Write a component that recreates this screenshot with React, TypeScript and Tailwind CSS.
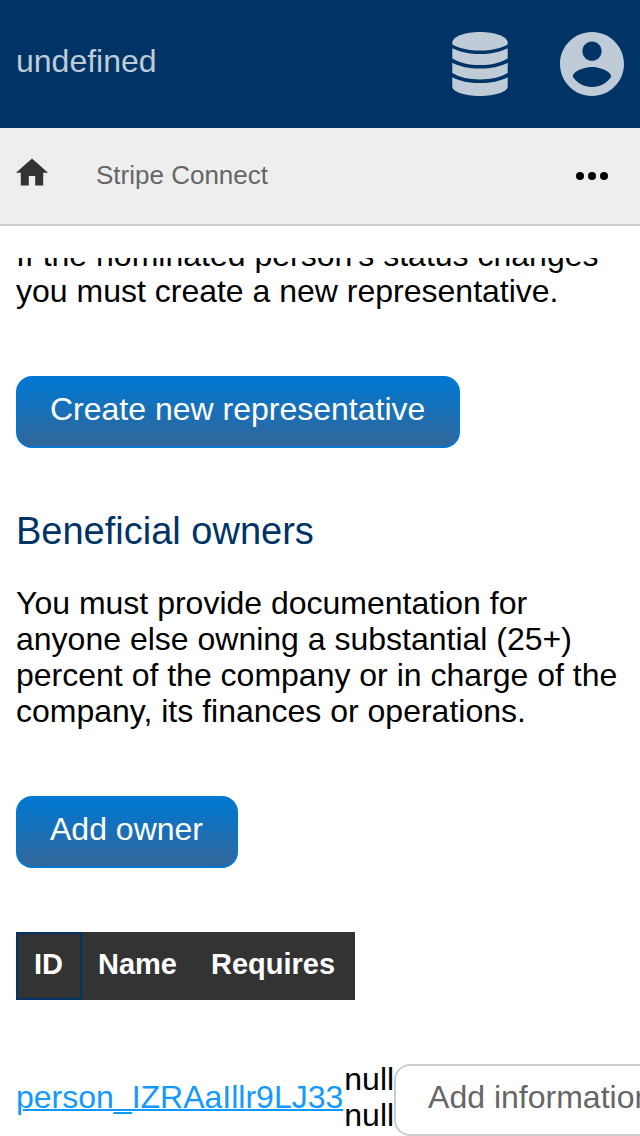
import type { ReactNode } from "react";

function DatabaseIcon() {
  return (
    <svg viewBox="0 0 56 64" className="h-16 w-14" fill="currentColor" aria-hidden="true">
      <path d="M28 0C43.300 0 55.700 4.700 55.700 10.500V12.600C48 16.700 39 18.600 28 18.600S8 16.700.3 12.600V10.500C.3 4.700 12.700 0 28 0Z" />
      <path d="M.3 16.300C8 20.200 17 22.100 28 22.100S48 20.200 55.700 16.300V26.600C48 31.200 39 33.100 28 33.100S8 31.200.3 26.600Z" />
      <path d="M.3 30.700C8 34.700 17 36.600 28 36.600S48 34.700 55.700 30.700V41.100C48 45.600 39 47.500 28 47.500S8 45.600.3 41.100Z" />
      <path d="M.3 45.200C8 49.200 17 51.100 28 51.100S48 49.200 55.700 45.200V54.500C55.700 59.700 43.300 64 28 64S.3 59.700.3 54.500Z" />
    </svg>
  );
}

function AccountIcon() {
  return (
    <svg viewBox="2 2 20 20" className="size-16" fill="currentColor" aria-hidden="true">
      <path d="M12 2C6.480 2 2 6.480 2 12s4.480 10 10 10 10-4.480 10-10S17.520 2 12 2zm0 3c1.660 0 3 1.340 3 3s-1.340 3-3 3-3-1.340-3-3 1.340-3 3-3zm0 14.200c-2.500 0-4.710-1.280-6-3.220.03-1.990 4-3.080 6-3.080 1.990 0 5.970 1.090 6 3.080-1.290 1.940-3.500 3.220-6 3.220z" />
    </svg>
  );
}

function PrimaryButton({ children }: { children: ReactNode }) {
  return (
    <button
      type="button"
      className="block rounded-2xl border-2 border-[#0078d2] bg-[linear-gradient(#0078d2,#336699)] pr-[33px] pl-8 pt-[13px] pb-[19px] text-white"
    >
      {children}
    </button>
  );
}

export default function App() {
  return (
    <div className="flex h-screen flex-col overflow-hidden bg-white font-['Liberation_Sans',Arial,sans-serif] text-[32px] leading-9 text-black">
      <header className="flex h-32 shrink-0 items-center justify-between bg-[#003366] px-4 text-[#bfccd8]">
        <a href="#home" className="pb-1.5">undefined</a>
        <div className="flex items-center gap-13">
          <button type="button" aria-label="Database"><DatabaseIcon /></button>
          <button type="button" aria-label="Account"><AccountIcon /></button>
        </div>
      </header>

      <nav className="flex h-[98px] shrink-0 items-center border-b-2 border-[#cccccc] bg-[#eeeeee] px-4">
        <a href="#dashboard" aria-label="Home" className="pb-2 text-[#333333]">
          <svg viewBox="2 3 20 17" className="h-7 w-8" fill="currentColor" aria-hidden="true">
            <path d="M10 20v-6h4v6h5v-8h3L12 3 2 12h3v8z" />
          </svg>
        </a>
        <a href="#connect" className="ml-12 pb-0.5 text-[26px] text-[#666666]">Stripe Connect</a>
        <button type="button" aria-label="More" className="mr-4 ml-auto flex gap-1">
          <span className="size-2 rounded-full bg-black" />
          <span className="size-2 rounded-full bg-black" />
          <span className="size-2 rounded-full bg-black" />
        </button>
      </nav>

      <main className="mt-8 min-h-0 flex-1 overflow-hidden px-4">
        <section className="-mt-[21px]">
          <p>If the nominated person's status changes you must create a new representative.</p>
          <div className="mt-[67px]">
            <PrimaryButton>Create new representative</PrimaryButton>
          </div>
        </section>

        <section className="mt-[61px]">
          <h2 className="text-[38px] leading-11 text-[#003366]">Beneficial owners</h2>
          <p className="mt-8">
            You must provide documentation for anyone else owning a substantial (25+) percent of the
            company or in charge of the company, its finances or operations.
          </p>
          <div className="mt-[67px]">
            <PrimaryButton>Add owner</PrimaryButton>
          </div>

          <table className="mt-16 block">
            <thead className="block">
              <tr className="flex w-max bg-[#333333] text-left text-[29px] leading-8 text-white">
                <th className="border-2 border-[#003366] pt-3.5 pr-[17px] pb-[18px] pl-4">ID</th>
                <th className="px-4 pt-4 pb-5">Name</th>
                <th className="pt-4 pr-5 pb-5 pl-[18px]">Requires</th>
              </tr>
            </thead>
            <tbody className="mt-[61px] block">
              <tr className="flex w-max items-start">
                <td className="pt-[18px] pr-px">
                  <a href="#person" className="text-[#1199ff] underline decoration-2">person_IZRAaIllr9LJ33</a>
                </td>
                <td>null<br />null</td>
                <td className="pt-[3px]">
                  <button
                    type="button"
                    className="block rounded-2xl border-2 border-[#cccccc] bg-white px-8 pt-[13px] pb-[19px] text-[#666666]"
                  >
                    Add information
                  </button>
                </td>
              </tr>
            </tbody>
          </table>
        </section>
      </main>
    </div>
  );
}
